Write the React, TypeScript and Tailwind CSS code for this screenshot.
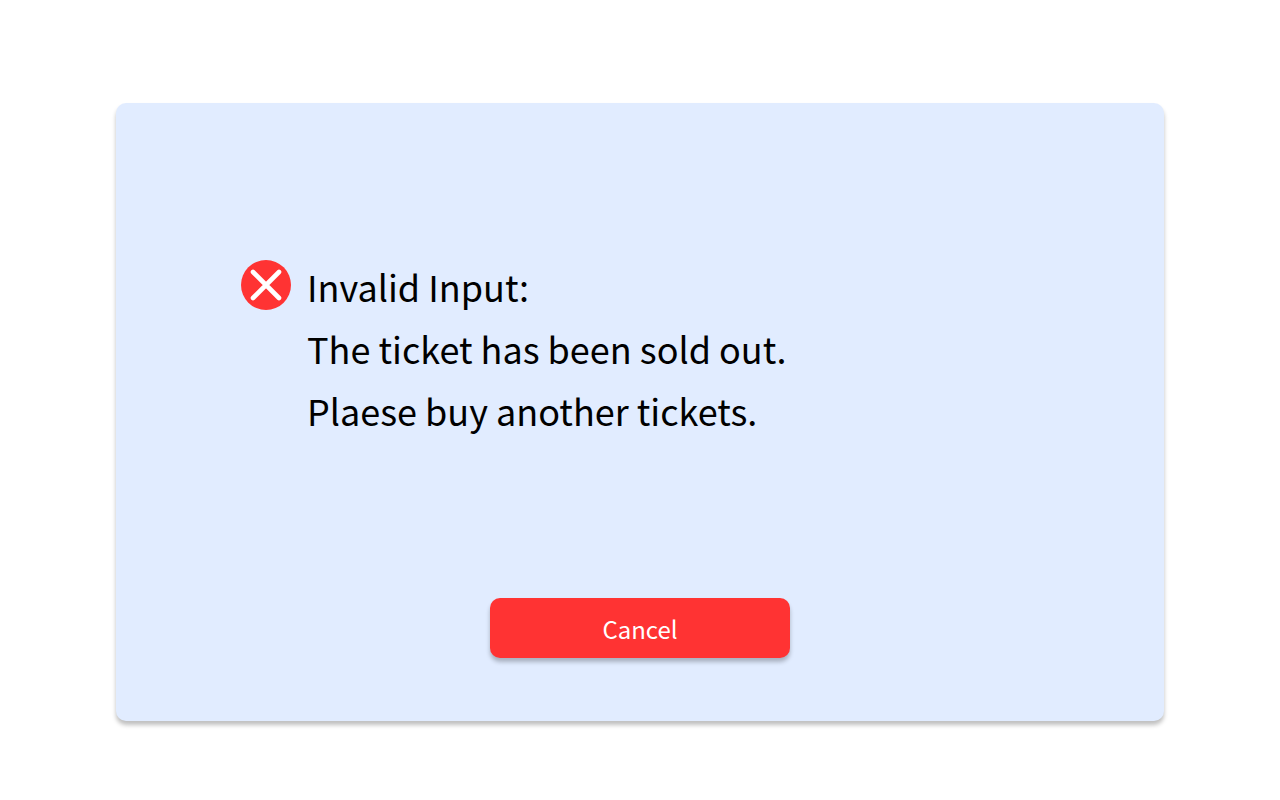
export default function App() {
  return (
    <main className="flex min-h-screen items-center justify-center bg-white px-[116px] pt-[103px] pb-[79px] font-['Noto_Sans_CJK_JP','Noto_Sans_CJK_SC',sans-serif] text-black">
      <section
        role="alertdialog"
        aria-labelledby="dialog-title"
        aria-describedby="dialog-message"
        className="flex w-full flex-col rounded-[10px] bg-[#e1ecff] px-[125px] pt-[152px] pb-[63px] shadow-[0_4px_4px_rgba(0,0,0,0.25)]"
      >
        <div className="flex items-start gap-4">
          <svg aria-hidden="true" viewBox="0 0 50 50" className="mt-[5px] size-[50px] shrink-0">
            <circle cx="25" cy="25" r="25" fill="#ff3333" />
            <path d="M12 12 38 38M38 12 12 38" stroke="white" strokeWidth="4.6" strokeLinecap="round" />
          </svg>
          <div className="text-4xl leading-[62px]">
            <h1 id="dialog-title">Invalid Input:</h1>
            <p id="dialog-message">
              The ticket has been sold out.
              <br />
              Plaese buy another tickets.
            </p>
          </div>
        </div>
        <button
          type="button"
          className="mt-[157px] h-[60px] w-[300px] self-center rounded-[10px] bg-[#ff3333] pt-0.5 text-2xl text-white shadow-[0_4px_4px_rgba(0,0,0,0.25)]"
        >
          Cancel
        </button>
      </section>
    </main>
  );
}
